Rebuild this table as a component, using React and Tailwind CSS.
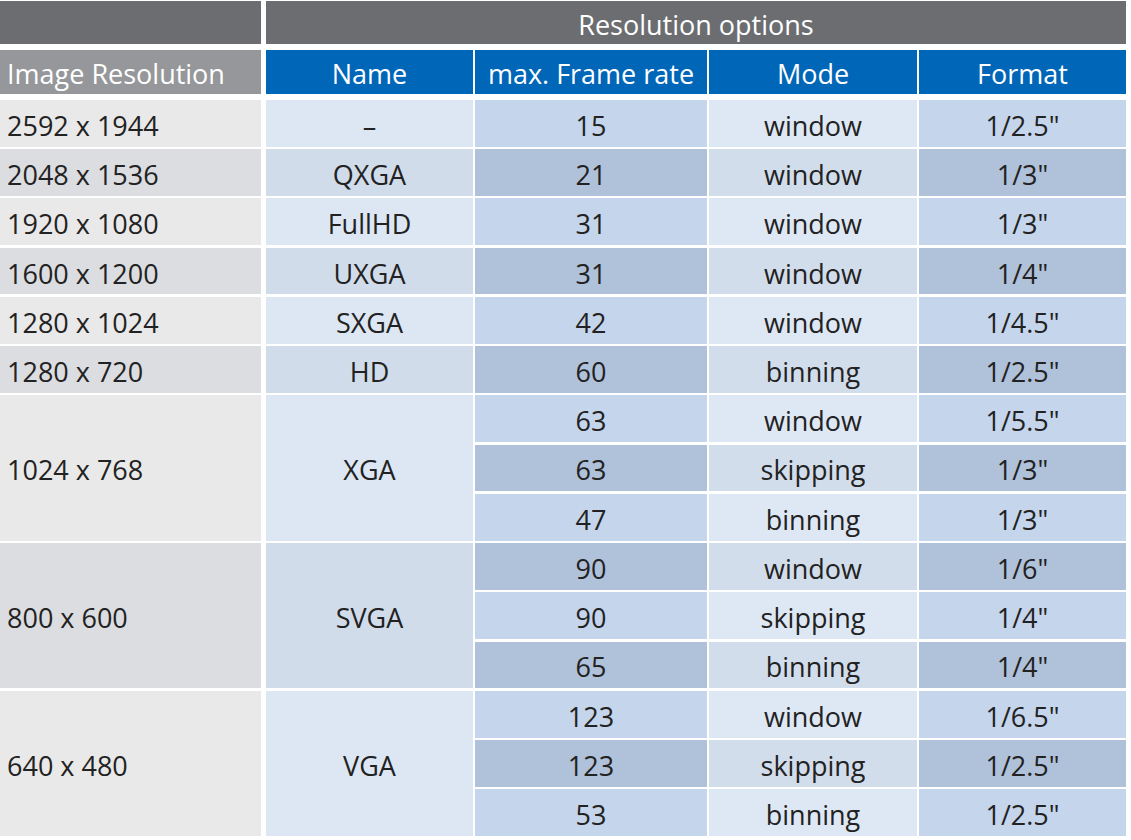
import React from "react";

const groups = [
  { res: "2592 x 1944", name: "–", subs: [["15", "window", '1/2.5"']] },
  { res: "2048 x 1536", name: "QXGA", subs: [["21", "window", '1/3"']] },
  { res: "1920 x 1080", name: "FullHD", subs: [["31", "window", '1/3"']] },
  { res: "1600 x 1200", name: "UXGA", subs: [["31", "window", '1/4"']] },
  { res: "1280 x 1024", name: "SXGA", subs: [["42", "window", '1/4.5"']] },
  { res: "1280 x 720", name: "HD", subs: [["60", "binning", '1/2.5"']] },
  {
    res: "1024 x 768",
    name: "XGA",
    subs: [
      ["63", "window", '1/5.5"'],
      ["63", "skipping", '1/3"'],
      ["47", "binning", '1/3"'],
    ],
  },
  {
    res: "800 x 600",
    name: "SVGA",
    subs: [
      ["90", "window", '1/6"'],
      ["90", "skipping", '1/4"'],
      ["65", "binning", '1/4"'],
    ],
  },
  {
    res: "640 x 480",
    name: "VGA",
    subs: [
      ["123", "window", '1/6.5"'],
      ["123", "skipping", '1/2.5"'],
      ["53", "binning", '1/2.5"'],
    ],
  },
];

const font = { fontFamily: '"Open Sans", "Liberation Sans", sans-serif' };

export default function App() {
  const cells = [];
  let sub = 0;
  groups.forEach((g, gi) => {
    const dark = gi % 2 === 1;
    const span = g.subs.length === 3 ? "row-span-3" : "";
    cells.push(
      <div
        key={`r${gi}`}
        className={`${span} mr-[3px] flex items-center pl-[7px] pt-[4px] ${
          dark ? "bg-[#dcdde0]" : "bg-[#e9e9e9]"
        }`}
      >
        {g.res}
      </div>
    );
    cells.push(
      <div
        key={`n${gi}`}
        className={`${span} flex items-center justify-center pt-[4px] ${
          dark ? "bg-[#d1dcea]" : "bg-[#dde7f4]"
        }`}
      >
        {g.name}
      </div>
    );
    g.subs.forEach((s, si) => {
      const d = sub % 2 === 1;
      sub++;
      cells.push(
        <div
          key={`f${gi}-${si}`}
          className={`flex items-center justify-center pt-[4px] ${
            d ? "bg-[#b0c1da]" : "bg-[#c5d5ec]"
          }`}
        >
          {s[0]}
        </div>
      );
      cells.push(
        <div
          key={`m${gi}-${si}`}
          className={`flex items-center justify-center pt-[4px] ${
            d ? "bg-[#d2ddec]" : "bg-[#dee8f5]"
          }`}
        >
          {s[1]}
        </div>
      );
      cells.push(
        <div
          key={`o${gi}-${si}`}
          className={`flex items-center justify-center pt-[4px] ${
            d ? "bg-[#b0c1da]" : "bg-[#c5d5ec]"
          }`}
        >
          {s[2]}
        </div>
      );
    });
  });

  return (
    <div
      className="w-[1131px] h-[840px] bg-white text-[27px] leading-none text-[#222222]"
      style={font}
    >
      <div className="pt-[1px] grid grid-cols-[264px_207px_232px_208px_207px] grid-rows-[43px_44px] gap-x-[2px] gap-y-[6px]">
        <div className="mr-[3px] bg-[#6c6d71]" />
        <div className="col-span-4 flex items-center justify-center bg-[#6c6d71] pt-[3px] text-white">
          Resolution options
        </div>
        <div className="mr-[3px] flex items-center bg-[#96979a] pl-[7px] pt-[3px] text-white">
          Image Resolution
        </div>
        <div className="flex items-center justify-center bg-[#0066b8] pt-[3px] text-white">
          Name
        </div>
        <div className="flex items-center justify-center bg-[#0066b8] pt-[3px] text-white">
          max. Frame rate
        </div>
        <div className="flex items-center justify-center bg-[#0066b8] pt-[3px] text-white">
          Mode
        </div>
        <div className="flex items-center justify-center bg-[#0066b8] pt-[3px] text-white">
          Format
        </div>
      </div>
      <div className="mt-[6px] grid h-[736px] grid-cols-[264px_207px_232px_208px_207px] grid-rows-[repeat(15,1fr)] gap-x-[2px] gap-y-[2.5px]">
        {cells}
      </div>
    </div>
  );
}
